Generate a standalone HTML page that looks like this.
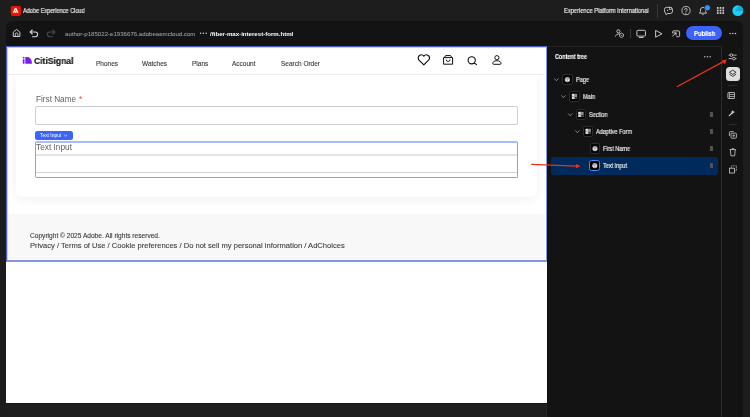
<!DOCTYPE html>
<html><head><meta charset="utf-8">
<style>
*{box-sizing:border-box;margin:0;padding:0}
html,body{width:750px;height:417px;overflow:hidden;background:#1d1d1d;font-family:"Liberation Sans",sans-serif;position:relative}
.a{position:absolute;white-space:nowrap}
.t{will-change:transform}
svg{position:absolute;left:0;top:0;overflow:visible}
</style></head><body>
<div class="a" style="left:6px;top:21px;width:737px;height:400px;background:#131313;border-radius:6px 6px 0 0"></div>
<div class="a" style="left:6px;top:46px;width:541px;height:357px;background:#fff"></div>
<div class="a" style="left:6px;top:404px;width:541px;height:13px;background:#1e1e1e"></div>
<div class="a" style="left:546px;top:404px;width:1px;height:13px;background:#262626"></div>
<div class="a" style="left:16px;top:75px;width:521px;height:122px;background:#fff;border-radius:0 0 6px 6px;box-shadow:0 2px 12px rgba(0,0,0,.06)"></div>
<div class="a" style="left:7px;top:47px;width:539px;height:27px;background:#fff"></div>
<div class="a" style="left:8px;top:74px;width:537px;height:1px;background:#efefef"></div>
<div class="a" style="left:8px;top:214px;width:537px;height:45px;background:#f8f8f8"></div>
<div class="a" style="left:6px;top:46px;width:541px;height:216px;border-left:1px solid #5262c8;border-top:1px solid #4d5cc0;border-right:1px solid #8797e4;border-bottom:2px solid #8494e0"></div>
<div class="a" style="left:7px;top:47px;width:539px;height:1px;background:#c3cbf3"></div>
<div class="a" style="left:7px;top:47px;width:1px;height:213px;background:#c3cbf3"></div>
<div class="a" style="left:721px;top:46px;width:1px;height:371px;background:#2a2a2a"></div>
<div class="a" style="left:547px;top:45.5px;width:175px;height:0.5px;background:#222"></div>
<div class="a t" style="left:23.30px;top:8.09px;font-size:6.45px;line-height:6.45px;color:#ececec;font-weight:normal;transform:scaleX(0.866);transform-origin:0 0;-webkit-text-stroke:0.18px #ececec">Adobe Experience Cloud</div>
<div class="a t" style="left:563.80px;top:8.09px;font-size:6.45px;line-height:6.45px;color:#ececec;font-weight:normal;transform:scaleX(0.889);transform-origin:0 0;-webkit-text-stroke:0.18px #ececec">Experience Platform International</div>
<div class="a" style="left:657px;top:4px;width:1px;height:13.5px;background:#383838"></div>
<div class="a t" style="left:64.80px;top:31.39px;font-size:6.1px;line-height:6.1px;color:#9a9a9a;font-weight:normal;-webkit-text-stroke:0.08px #9a9a9a">author-p185022-e1936676.adobeaemcloud.com</div>
<div class="a t" style="left:210.20px;top:31.39px;font-size:6.1px;line-height:6.1px;color:#ffffff;font-weight:bold;">/fiber-max-interest-form.html</div>
<div class="a" style="left:630px;top:29px;width:1px;height:9px;background:#3a3a3a"></div>
<div class="a" style="left:686.4px;top:26.3px;width:35.6px;height:13.8px;background:#3b63fb;border-radius:7px"></div>
<div class="a t" style="left:693.90px;top:30.96px;font-size:6.6px;line-height:6.6px;color:#ffffff;font-weight:bold;transform:scaleX(0.89);transform-origin:0 0;-webkit-text-stroke:0.15px #fff">Publish</div>
<div class="a t" style="left:33.60px;top:56.68px;font-size:9.3px;line-height:9.3px;color:#151515;font-weight:bold;transform:scaleX(0.92);transform-origin:0 0;-webkit-text-stroke:0.2px #151515">CitiSignal</div>
<div class="a t" style="left:96.20px;top:61.05px;font-size:6.5px;line-height:6.5px;color:#3a3a3a;font-weight:normal;-webkit-text-stroke:0.12px #3a3a3a">Phones</div>
<div class="a t" style="left:142.20px;top:61.05px;font-size:6.5px;line-height:6.5px;color:#3a3a3a;font-weight:normal;-webkit-text-stroke:0.12px #3a3a3a">Watches</div>
<div class="a t" style="left:191.80px;top:61.05px;font-size:6.5px;line-height:6.5px;color:#3a3a3a;font-weight:normal;-webkit-text-stroke:0.12px #3a3a3a">Plans</div>
<div class="a t" style="left:232.40px;top:61.05px;font-size:6.5px;line-height:6.5px;color:#3a3a3a;font-weight:normal;-webkit-text-stroke:0.12px #3a3a3a">Account</div>
<div class="a t" style="left:280.70px;top:61.05px;font-size:6.5px;line-height:6.5px;color:#3a3a3a;font-weight:normal;-webkit-text-stroke:0.12px #3a3a3a">Search Order</div>
<div class="a t" style="left:35.80px;top:95.61px;font-size:8.2px;line-height:8.2px;color:#626262;font-weight:normal;">First Name</div>
<div class="a t" style="left:78.60px;top:95.61px;font-size:8.2px;line-height:8.2px;color:#e0483b;font-weight:normal;">*</div>
<div class="a" style="left:35px;top:106px;width:483px;height:19px;border:1px solid #cbced2;border-radius:2px"></div>
<div class="a" style="left:35.3px;top:130.5px;width:37.7px;height:9.7px;background:#3d64fa;border-radius:2.5px"></div>
<div class="a t" style="left:40.10px;top:134.00px;font-size:4.9px;line-height:4.9px;color:#ffffff;font-weight:normal;">Text Input</div>
<div class="a t" style="left:35.70px;top:142.52px;font-size:8.3px;line-height:8.3px;color:#626262;font-weight:normal;">Text Input</div>
<div class="a" style="left:35px;top:154px;width:483px;height:2px;background:#e4e4e4"></div>
<div class="a" style="left:35px;top:172px;width:483px;height:1px;background:#d2d4d6"></div>
<div class="a" style="left:35px;top:141px;width:483px;height:37px;border:1px solid #86a0fa;border-top:2px solid #a9bbfc;border-radius:2px"></div>
<div class="a t" style="left:30.20px;top:232.96px;font-size:6.6px;line-height:6.6px;color:#333;font-weight:normal;-webkit-text-stroke:0.08px #333">Copyright © 2025 Adobe. All rights reserved.</div>
<div class="a t" style="left:30.10px;top:242.14px;font-size:7.57px;line-height:7.57px;color:#3c3c3c;font-weight:normal;-webkit-text-stroke:0.1px #3c3c3c">Privacy / Terms of Use / Cookie preferences / Do not sell my personal information / AdChoices</div>
<div class="a t" style="left:554.70px;top:54.13px;font-size:6.4px;line-height:6.4px;color:#ffffff;font-weight:bold;transform:scaleX(0.85);transform-origin:0 0;-webkit-text-stroke:0.12px #fff">Content tree</div>
<div class="a" style="left:551px;top:157.2px;width:167px;height:17.5px;background:#00295c;border-radius:2.5px"></div>
<div class="a t" style="left:575.60px;top:77.22px;font-size:6.3px;line-height:6.3px;color:#ececec;font-weight:normal;transform:scaleX(0.88);transform-origin:0 0;-webkit-text-stroke:0.18px #ececec">Page</div>
<div class="a" style="left:562.2px;top:74.20px;width:10.4px;height:10.4px;background:#050505;border:1px solid #2c2c2c;border-radius:2px"></div>
<div class="a t" style="left:582.70px;top:94.22px;font-size:6.3px;line-height:6.3px;color:#ececec;font-weight:normal;transform:scaleX(0.88);transform-origin:0 0;-webkit-text-stroke:0.18px #ececec">Main</div>
<div class="a" style="left:569.3px;top:91.20px;width:10.4px;height:10.4px;background:#050505;border:1px solid #2c2c2c;border-radius:2px"></div>
<div class="a t" style="left:589.00px;top:112.22px;font-size:6.3px;line-height:6.3px;color:#ececec;font-weight:normal;transform:scaleX(0.88);transform-origin:0 0;-webkit-text-stroke:0.18px #ececec">Section</div>
<div class="a" style="left:575.7px;top:109.20px;width:10.4px;height:10.4px;background:#050505;border:1px solid #2c2c2c;border-radius:2px"></div>
<div class="a" style="left:709.8px;top:111.60px;width:3.2px;height:5.4px;background:#525252;border-radius:0.5px"></div>
<div class="a t" style="left:596.10px;top:129.22px;font-size:6.3px;line-height:6.3px;color:#ececec;font-weight:normal;transform:scaleX(0.88);transform-origin:0 0;-webkit-text-stroke:0.18px #ececec">Adaptive Form</div>
<div class="a" style="left:583px;top:126.20px;width:10.4px;height:10.4px;background:#050505;border:1px solid #2c2c2c;border-radius:2px"></div>
<div class="a" style="left:709.8px;top:128.60px;width:3.2px;height:5.4px;background:#525252;border-radius:0.5px"></div>
<div class="a t" style="left:603.30px;top:146.22px;font-size:6.3px;line-height:6.3px;color:#ececec;font-weight:normal;transform:scaleX(0.88);transform-origin:0 0;-webkit-text-stroke:0.18px #ececec">First Name</div>
<div class="a" style="left:589.8px;top:143.20px;width:10.4px;height:10.4px;background:#050505;border:1px solid #2c2c2c;border-radius:2px"></div>
<div class="a" style="left:709.8px;top:145.60px;width:3.2px;height:5.4px;background:#525252;border-radius:0.5px"></div>
<div class="a t" style="left:603.30px;top:163.22px;font-size:6.3px;line-height:6.3px;color:#ececec;font-weight:normal;transform:scaleX(0.88);transform-origin:0 0;-webkit-text-stroke:0.18px #ececec">Text Input</div>
<div class="a" style="left:589.1px;top:160.10px;width:11.4px;height:11.4px;background:#000;border:1px solid #4b8cf0;border-radius:2.5px"></div>
<div class="a" style="left:709.8px;top:162.60px;width:3.2px;height:5.4px;background:#525252;border-radius:0.5px"></div>
<div class="a" style="left:725.5px;top:67.1px;width:14.5px;height:14px;background:#dedede;border-radius:3.5px"></div>
<div class="a" style="left:728.4px;top:84.5px;width:8.4px;height:1px;background:#2a2a2a"></div>
<div class="a" style="left:728.5px;top:123.5px;width:8.2px;height:1px;background:#2a2a2a"></div>
<svg width="750" height="417" viewBox="0 0 750 417"><rect x="10.8" y="5.9" width="10.1" height="10" rx="1.8" fill="#f50f00"/><path d="M14.8 7.9 H16.4 L18.5 12.7 H16.9 L15.6 9.5 L14.2 12.7 H12.7 Z" fill="#fff"/><path d="M15.5 10.6 L16.6 12.7 H14.6 Z" fill="#fff"/><path d="M13.3 32.2 L16.6 29.4 L19.9 32.2 V36.5 H13.3 Z" fill="none" stroke="#cdcdcd" stroke-width="1" stroke-linejoin="round"/><path d="M15.3 36.5 V34.2 a1.3 1.3 0 0 1 2.6 0 V36.5" fill="none" stroke="#cdcdcd" stroke-width="0.95"/><path d="M30.3 32 H35.3 A2.35 2.35 0 0 1 35.3 36.7 H32.5" fill="none" stroke="#d8d8d8" stroke-width="1.05" stroke-linecap="round"/><path d="M32.3 30 L30.2 32 L32.3 34" fill="none" stroke="#d8d8d8" stroke-width="1.05" stroke-linecap="round" stroke-linejoin="round"/><path d="M54.7 32 H49.7 A2.35 2.35 0 0 0 49.7 36.7 H52.5" fill="none" stroke="#4a4a4a" stroke-width="1.05" stroke-linecap="round"/><path d="M52.7 30 L54.8 32 L52.7 34" fill="none" stroke="#4a4a4a" stroke-width="1.05" stroke-linecap="round" stroke-linejoin="round"/><circle cx="200.6" cy="33.3" r="0.75" fill="#d0d0d0"/><circle cx="203.4" cy="33.3" r="0.75" fill="#d0d0d0"/><circle cx="206.2" cy="33.3" r="0.75" fill="#d0d0d0"/><circle cx="618.4" cy="31.3" r="1.55" fill="none" stroke="#d0d0d0" stroke-width="0.9"/><path d="M615.2 36.1 Q616.6 34 619.2 33.6" fill="none" stroke="#d0d0d0" stroke-width="0.9" stroke-linecap="round"/><path d="M621.5 33.1 L623.4 34.2 V36.4 L621.5 37.5 L619.6 36.4 V34.2 Z" fill="none" stroke="#d0d0d0" stroke-width="0.85" stroke-linejoin="round"/><circle cx="621.5" cy="35.3" r="0.5" fill="#d0d0d0"/><rect x="636.9" y="30.3" width="8.6" height="5.8" rx="1" fill="none" stroke="#cfcfcf" stroke-width="0.95"/><path d="M639.3 37.5 H643.1" stroke="#cfcfcf" stroke-width="0.95" stroke-linecap="round"/><path d="M655.6 30.4 V37.2 L662 33.8 Z" fill="none" stroke="#cfcfcf" stroke-width="0.95" stroke-linejoin="round"/><path d="M672.7 33 V31.9 a1 1 0 0 1 1 -1 H678.6 a1 1 0 0 1 1 1 V35.7 a1 1 0 0 1 -1 1 H676.8" fill="none" stroke="#d0d0d0" stroke-width="0.95" stroke-linecap="round"/><path d="M672.5 36.3 L675.9 32.9 M673.9 32.9 H676.1 V35.1" fill="none" stroke="#d0d0d0" stroke-width="0.95" stroke-linecap="round" stroke-linejoin="round"/><circle cx="730.1" cy="33.4" r="0.75" fill="#d8d8d8"/><circle cx="732.8" cy="33.4" r="0.75" fill="#d8d8d8"/><circle cx="735.5" cy="33.4" r="0.75" fill="#d8d8d8"/><circle cx="704.8" cy="56.8" r="0.7" fill="#cfcfcf"/><circle cx="707.5" cy="56.8" r="0.7" fill="#cfcfcf"/><circle cx="710.2" cy="56.8" r="0.7" fill="#cfcfcf"/><path d="M666.7 7.3 H670.3 a2.2 2.2 0 0 1 2.2 2.2 V11.3 a2.2 2.2 0 0 1 -2.2 2.2 H667.8 L666 14.7 V13.3 a2.2 2.2 0 0 1 -1.5 -2 V9.5 a2.2 2.2 0 0 1 2.2 -2.2 Z" fill="none" stroke="#d0d0d0" stroke-width="0.9" stroke-linejoin="round"/><rect x="669.4" y="7.4" width="2.2" height="2.2" fill="#1b1b1b" stroke="#d0d0d0" stroke-width="0.7"/><circle cx="667.6" cy="10.4" r="0.6" fill="#d0d0d0"/><circle cx="686" cy="10.6" r="4.1" fill="none" stroke="#cfcfcf" stroke-width="0.85"/><path d="M684.6 9.7 a1.3 1.3 0 1 1 1.9 1.15 c-.5 .3 -.6 .6 -.6 1.1" fill="none" stroke="#cfcfcf" stroke-width="0.9" stroke-linecap="round"/><circle cx="685.9" cy="13.5" r="0.55" fill="#cfcfcf"/><path d="M699.6 13.2 H706.5 L705.6 11.8 V10 a2.6 2.6 0 0 0 -5.2 0 V11.8 Z" fill="none" stroke="#cfcfcf" stroke-width="0.9" stroke-linejoin="round"/><path d="M702.1 14.3 a1 1 0 0 0 1.8 0" fill="none" stroke="#cfcfcf" stroke-width="0.8"/><circle cx="707.4" cy="7.8" r="3" fill="#3d8ff7" stroke="#1b1b1b" stroke-width="0.6"/><rect x="716.90" y="7.10" width="1.7" height="1.7" fill="#d6d6d6"/><rect x="716.90" y="9.65" width="1.7" height="1.7" fill="#d6d6d6"/><rect x="716.90" y="12.20" width="1.7" height="1.7" fill="#d6d6d6"/><rect x="719.65" y="7.10" width="1.7" height="1.7" fill="#d6d6d6"/><rect x="719.65" y="9.65" width="1.7" height="1.7" fill="#d6d6d6"/><rect x="719.65" y="12.20" width="1.7" height="1.7" fill="#d6d6d6"/><rect x="722.40" y="7.10" width="1.7" height="1.7" fill="#d6d6d6"/><rect x="722.40" y="9.65" width="1.7" height="1.7" fill="#d6d6d6"/><rect x="722.40" y="12.20" width="1.7" height="1.7" fill="#d6d6d6"/><circle cx="737.8" cy="10.65" r="5.4" fill="#1bcdf5"/><path d="M738.5 6.2 L735.5 11.1 H743.15 A5.4 5.4 0 0 0 740.6 6.0 Z" fill="#12a9d3"/><path d="M423.8 64.8 L418.8 59.8 a2.9 2.9 0 0 1 5 -3.6 a2.9 2.9 0 0 1 5 3.6 Z" fill="none" stroke="#111" stroke-width="1.15" stroke-linejoin="round"/><path d="M443.6 57.6 H452.6 V64.2 H443.6 Z M444.4 57.6 L445.6 55.6 H450.6 L451.8 57.6" fill="none" stroke="#111" stroke-width="1" stroke-linejoin="round"/><path d="M446.2 59.6 a1.9 1.9 0 0 0 3.8 0" fill="none" stroke="#111" stroke-width="0.9"/><circle cx="471.7" cy="60.3" r="3.6" fill="none" stroke="#111" stroke-width="1.1"/><path d="M474.3 63 L476.5 64.6" stroke="#111" stroke-width="1.1" stroke-linecap="round"/><circle cx="496.9" cy="57.7" r="2.1" fill="none" stroke="#111" stroke-width="1"/><path d="M492.8 63.4 a4.1 2.6 0 0 1 8.2 0 a0.9 0.9 0 0 1 -0.9 0.9 H493.7 a0.9 0.9 0 0 1 -0.9 -0.9 Z" fill="none" stroke="#111" stroke-width="1" stroke-linejoin="round"/><rect x="22.8" y="59.2" width="1.7" height="4.5" fill="#7a1cf0"/><rect x="22.8" y="56.9" width="1.7" height="1.5" fill="#7a1cf0"/><path d="M25.3 63.7 V56.9 H27.6 A4.6 6.8 0 0 1 32 63.7 Z" fill="#7a1cf0"/><path d="M64.5 135.1 L65.6 136.1 L66.7 135.1" fill="none" stroke="#fff" stroke-width="0.7" stroke-linecap="round"/><path d="M554.5 78.7 L556.4000000000001 80.7 L558.3000000000001 78.7" fill="none" stroke="#a0a0a0" stroke-width="0.8" stroke-linecap="round" stroke-linejoin="round"/><path d="M561.5999999999999 95.7 L563.5 97.7 L565.4 95.7" fill="none" stroke="#a0a0a0" stroke-width="0.8" stroke-linecap="round" stroke-linejoin="round"/><path d="M568.3 113.7 L570.2 115.7 L572.1 113.7" fill="none" stroke="#a0a0a0" stroke-width="0.8" stroke-linecap="round" stroke-linejoin="round"/><path d="M575.5 130.70000000000002 L577.4000000000001 132.70000000000002 L579.3000000000001 130.70000000000002" fill="none" stroke="#a0a0a0" stroke-width="0.8" stroke-linecap="round" stroke-linejoin="round"/><circle cx="567.4000000000001" cy="79.60" r="2.6" fill="#b0b0b0"/><circle cx="566.10" cy="80.40" r="0.8" fill="#eee"/><circle cx="568.70" cy="80.40" r="0.8" fill="#eee"/><rect x="571.80" y="93.70" width="5.4" height="5.4" rx="0.6" fill="#8c8c8c"/><rect x="572.00" y="93.90" width="2.2" height="2.2" fill="#e0e0e0"/><rect x="572.00" y="96.70" width="2.2" height="2.2" fill="#e0e0e0"/><rect x="574.90" y="97.30" width="2" height="1.2" fill="#000"/><rect x="578.20" y="111.70" width="5.4" height="5.4" rx="0.6" fill="#8c8c8c"/><rect x="578.40" y="111.90" width="2.2" height="2.2" fill="#e0e0e0"/><rect x="578.40" y="114.70" width="2.2" height="2.2" fill="#e0e0e0"/><rect x="581.30" y="115.30" width="2" height="1.2" fill="#000"/><rect x="585.50" y="128.70" width="5.4" height="5.4" rx="0.6" fill="#8c8c8c"/><rect x="585.70" y="128.90" width="2.2" height="2.2" fill="#e0e0e0"/><rect x="585.70" y="131.70" width="2.2" height="2.2" fill="#e0e0e0"/><rect x="588.60" y="132.30" width="2" height="1.2" fill="#000"/><circle cx="595.0" cy="148.60" r="2.6" fill="#b0b0b0"/><circle cx="593.70" cy="149.40" r="0.8" fill="#eee"/><circle cx="596.30" cy="149.40" r="0.8" fill="#eee"/><circle cx="594.8000000000001" cy="165.60" r="2.6" fill="#b0b0b0"/><circle cx="593.50" cy="166.40" r="0.8" fill="#eee"/><circle cx="596.10" cy="166.40" r="0.8" fill="#eee"/><path d="M728.6 55.1 H736.6 M728.6 58.6 H736.6" stroke="#cfcfcf" stroke-width="0.8"/><circle cx="731.3" cy="55.1" r="1.35" fill="#131313" stroke="#cfcfcf" stroke-width="0.8"/><circle cx="733.9" cy="58.6" r="1.35" fill="#131313" stroke="#cfcfcf" stroke-width="0.8"/><path d="M732.75 70.2 L736.1 72.3 L732.75 74.4 L729.4 72.3 Z" fill="none" stroke="#222" stroke-width="0.85" stroke-linejoin="round"/><path d="M729.4 74.2 L732.75 76.4 L736.1 74.2" fill="none" stroke="#222" stroke-width="0.85" stroke-linejoin="round"/><rect x="727.9" y="92.5" width="6.6" height="6" rx="0.4" fill="none" stroke="#c8c8c8" stroke-width="0.85"/><path d="M729.6 94.5 H733.9 M729.6 96.5 H733.9 M729.4 92.5 V98.5" stroke="#c8c8c8" stroke-width="0.75"/><path d="M729.3 115.6 L731.6 113.3" stroke="#dcdcdc" stroke-width="1.2" stroke-linecap="round"/><path d="M732.8 109.9 L733.4 111.5 L735 112.1 L733.4 112.7 L732.8 114.3 L732.2 112.7 L730.6 112.1 L732.2 111.5 Z" fill="#e6e6e6"/><rect x="731" y="133.2" width="5.4" height="5" rx="0.8" fill="none" stroke="#cfcfcf" stroke-width="0.8"/><path d="M729.4 136 V132.4 a.8 .8 0 0 1 .8 -.8 H733.6" fill="none" stroke="#cfcfcf" stroke-width="0.8"/><path d="M733.7 134.4 V137 M732.4 135.7 H735" stroke="#cfcfcf" stroke-width="0.7"/><path d="M729.6 149.6 H736 M732 149.6 V148.7 H733.6 V149.6 M730.4 149.8 L730.9 155.8 H734.7 L735.2 149.8" fill="none" stroke="#cfcfcf" stroke-width="0.8" stroke-linejoin="round"/><rect x="729.4" y="168.2" width="5" height="4.8" fill="none" stroke="#cfcfcf" stroke-width="0.8"/><path d="M731.4 167.8 V165.8 H736.4 V170.8 H734.6" fill="none" stroke="#cfcfcf" stroke-width="0.8" stroke-dasharray="1 0.7"/><path d="M677.3 86.5 L724.3 61.1" stroke="#e8321e" stroke-width="1.25" stroke-linecap="round"/><path d="M726.8 59.6 L721.6 60.6 L724.9 64.2 Z" fill="#e8321e"/><path d="M531.6 164.3 L577 166.1" stroke="#e8321e" stroke-width="1.2" stroke-linecap="round"/><path d="M580.6 166.3 L576 163.9 L575.8 168.3 Z" fill="#e8321e"/></svg>
</body></html>
